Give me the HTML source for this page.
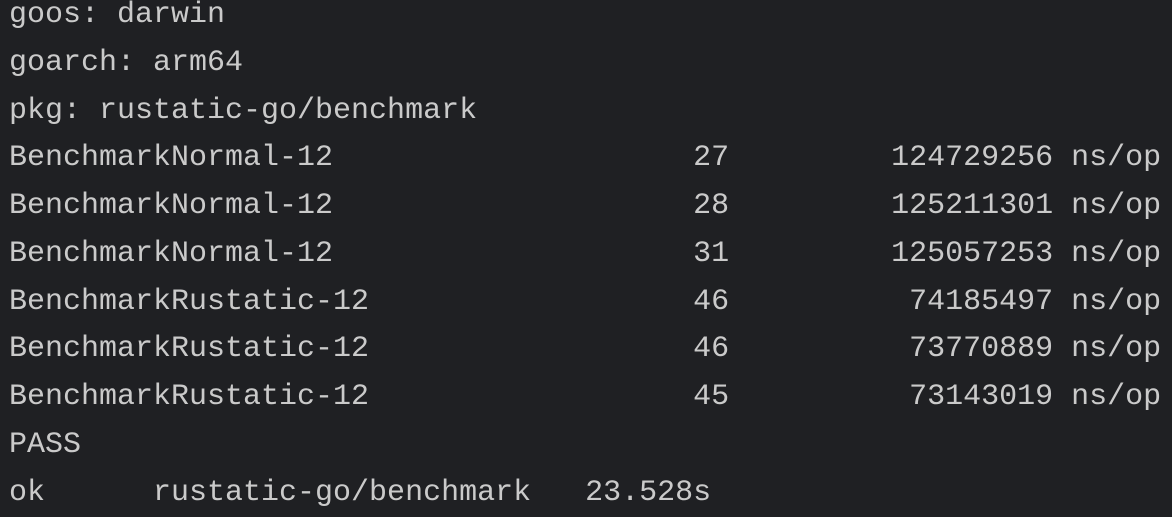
<!DOCTYPE html>
<html><head><style>
html,body{margin:0;padding:0;background:#1f2023;width:1172px;height:512px;overflow:hidden}
pre{margin:0;position:absolute;left:9px;top:-8px;font-family:"Liberation Mono",monospace;font-size:30px;line-height:47.75px;color:#cacaca;white-space:pre}
</style></head><body>
<pre>goos: darwin
goarch: arm64
pkg: rustatic-go/benchmark
BenchmarkNormal-12                    27         124729256 ns/op
BenchmarkNormal-12                    28         125211301 ns/op
BenchmarkNormal-12                    31         125057253 ns/op
BenchmarkRustatic-12                  46          74185497 ns/op
BenchmarkRustatic-12                  46          73770889 ns/op
BenchmarkRustatic-12                  45          73143019 ns/op
PASS
ok      rustatic-go/benchmark   23.528s</pre>
</body></html>
